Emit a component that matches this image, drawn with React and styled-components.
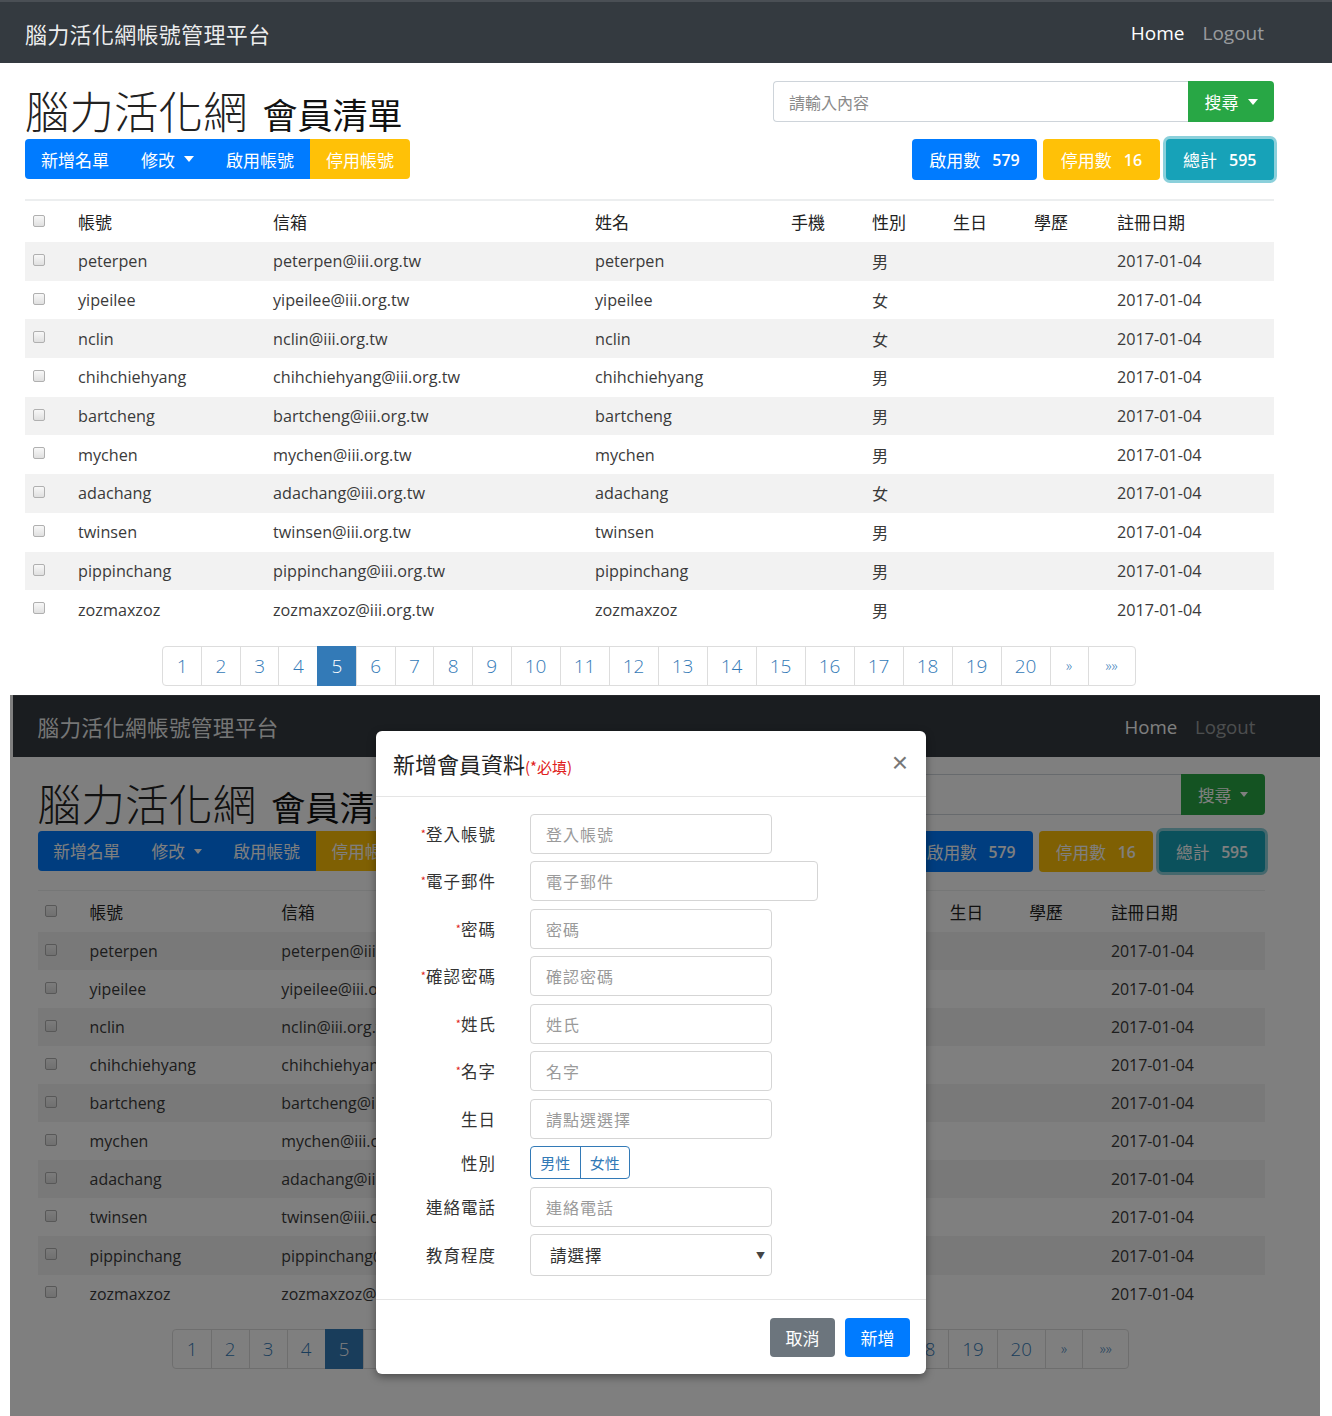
import React from "react";
import styled, { createGlobalStyle, css } from "styled-components";

const GlobalStyle = createGlobalStyle`
  html, body {
    margin: 0;
    padding: 0;
    background: #fff;
  }
  body {
    font-family: "Segoe UI", "Open Sans", "Noto Sans CJK TC", sans-serif;
    color: #333;
  }
  * {
    box-sizing: border-box;
  }
`;

const BLUE = "#007bff";
const YELLOW = "#ffc107";
const GREEN = "#28a745";
const TEAL = "#17a2b8";

const PageWrap = styled.div`
  width: 1332px;
  padding-bottom: 9px;
  background: #fff;
`;

const Navbar = styled.nav`
  height: 63px;
  background: #343a40;
  border-top: 2px solid #4a4f55;
  display: flex;
  align-items: center;
  justify-content: space-between;
  padding: 0 68px 0 25px;
`;

const Brand = styled.span`
  font-family: "Noto Sans CJK TC", sans-serif;
  font-size: 22px;
  color: rgba(255, 255, 255, 0.92);
  letter-spacing: 0.3px;
`;

const NavLinks = styled.div`
  display: flex;
  gap: 18px;
`;

const NavLink = styled.span`
  font-size: 19px;
  color: ${(p) => (p.$dim ? "rgba(255,255,255,0.5)" : "#fff")};
`;

const Content = styled.div`
  padding: 18px 58px 0 25px;
`;

const TopRow = styled.div`
  display: flex;
  justify-content: space-between;
`;

const LeftCol = styled.div`
  display: flex;
  flex-direction: column;
`;

const Heading = styled.h1`
  margin: 0;
  height: 58px;
  display: flex;
  align-items: baseline;
  font-family: "Noto Sans CJK TC", sans-serif;
  font-weight: 300;
  font-size: 44.5px;
  line-height: 58px;
  color: #222;
`;

const HeadingSmall = styled.small`
  margin-left: 15px;
  font-size: 35px;
  font-weight: 400;
  color: #111;
`;

const Caret = styled.span`
  display: inline-block;
  width: 0;
  height: 0;
  margin-left: 9px;
  vertical-align: middle;
  border-top: 6px solid currentColor;
  border-left: 5px solid transparent;
  border-right: 5px solid transparent;
`;

const BtnGroup = styled.div`
  display: flex;
  height: 40px;
  border-radius: 4px;
  overflow: hidden;
`;

const Btn = styled.button`
  border: none;
  margin: 0;
  padding: 0 ${(p) => p.$px || 16}px;
  height: ${(p) => p.$h || 40}px;
  font-family: "Noto Sans CJK TC", sans-serif;
  font-size: 17px;
  color: #fff;
  background: ${(p) => p.$bg || BLUE};
  white-space: nowrap;
  display: flex;
  align-items: center;
  ${(p) =>
    p.$round &&
    css`
      border-radius: 4px;
    `}
  ${(p) =>
    p.$focus &&
    css`
      box-shadow: 0 0 0 3px rgba(23, 162, 184, 0.5);
    `}
`;

const RightCol = styled.div`
  width: 501px;
  display: flex;
  flex-direction: column;
  align-items: flex-end;
  gap: 17px;
`;

const SearchGroup = styled.div`
  display: flex;
  width: 100%;
  height: 41px;
`;

const SearchInput = styled.input`
  flex: 1;
  height: 41px;
  border: 1px solid #ced4da;
  border-right: none;
  border-radius: 4px 0 0 4px;
  padding: 0 15px;
  font-family: "Noto Sans CJK TC", sans-serif;
  font-size: 16px;
  &::placeholder {
    color: #8a8a8a;
  }
`;

const SearchBtn = styled(Btn)`
  width: 86px;
  height: 41px;
  justify-content: center;
  border-radius: 0 4px 4px 0;
`;

const StatRow = styled.div`
  display: flex;
  gap: 6px;
`;

const StatNum = styled.span`
  margin-left: 12px;
  font-family: "Open Sans", sans-serif;
  font-size: 16px;
  font-weight: 600;
`;

const Table = styled.table`
  margin-top: 19px;
  width: 100%;
  table-layout: fixed;
  border-collapse: collapse;
`;

const Th = styled.th`
  width: ${(p) => p.$w}px;
  height: 42px;
  padding: 0 0 0 ${(p) => (p.$first ? 8 : 12)}px;
  border-top: 2px solid #eceeef;
  text-align: left;
  font-family: "Noto Sans CJK TC", sans-serif;
  font-weight: 400;
  font-size: 17px;
  color: #222;
`;

const Tr = styled.tr`
  height: 38.7px;
  background: ${(p) => (p.$odd ? "#f2f2f2" : "transparent")};
`;

const Td = styled.td`
  padding: 0 0 0 ${(p) => (p.$first ? 8 : 12)}px;
  font-size: 16.2px;
  color: #3a3a3a;
  white-space: nowrap;
  font-family: "Segoe UI", "Open Sans", "Noto Sans CJK TC", sans-serif;
`;

const Check = styled.span`
  display: inline-block;
  width: 12px;
  height: 12px;
  border: 1px solid #b0b0b0;
  border-radius: 2px;
  background: linear-gradient(#f8f8f8, #e0e0e0);
  vertical-align: middle;
  position: relative;
  top: -3px;
`;

const Pager = styled.div`
  margin-top: 17px;
  display: flex;
  justify-content: center;
`;

const PageItem = styled.span`
  height: 40px;
  min-width: ${(p) => p.$w}px;
  display: flex;
  align-items: center;
  justify-content: center;
  border: 1px solid #ddd;
  margin-left: -1px;
  font-family: "Open Sans", sans-serif;
  font-weight: 300;
  font-size: 19px;
  color: ${(p) => (p.$active ? "#fff" : "#337ab7")};
  background: ${(p) => (p.$active ? "#337ab7" : "#fff")};
  border-color: ${(p) => (p.$active ? "#337ab7" : "#ddd")};
  &:first-child {
    border-radius: 4px 0 0 4px;
  }
  &:last-child {
    border-radius: 0 4px 4px 0;
  }
`;

const Small = styled.span`
  font-size: 14px;
`;

const Shot = styled.div`
  position: relative;
  margin-left: 10px;
  width: 1310px;
  height: 721px;
  overflow: hidden;
  background: #fff;
`;

const Zoomed = styled.div`
  zoom: 0.983;
  padding-left: 3px;
`;

const Backdrop = styled.div`
  position: absolute;
  inset: 0;
  background: rgba(0, 0, 0, 0.5);
  padding: 36px 0 0 366px;
`;

const Modal = styled.div`
  width: 550px;
  background: #fff;
  border-radius: 6px;
  box-shadow: 0 3px 9px rgba(0, 0, 0, 0.4);
  font-family: "Noto Sans CJK TC", sans-serif;
`;

const ModalHeader = styled.div`
  height: 66px;
  display: flex;
  align-items: center;
  justify-content: space-between;
  padding: 0 18px 0 17px;
  border-bottom: 1px solid #e5e5e5;
`;

const ModalTitle = styled.h4`
  margin: 0;
  font-weight: 400;
  font-size: 22px;
  color: #222;
`;

const Required = styled.span`
  font-size: 15px;
  color: #e02020;
`;

const Close = styled.span`
  font-family: "Liberation Sans", sans-serif;
  font-size: 28px;
  font-weight: 300;
  color: #777;
  line-height: 1;
`;

const ModalBody = styled.div`
  display: grid;
  grid-template-columns: 120px 1fr;
  column-gap: 34px;
  row-gap: 7.5px;
  padding: 17px 0 23px;
  border-bottom: 1px solid #e5e5e5;
`;

const Label = styled.label`
  align-self: center;
  text-align: right;
  font-size: 16.5px;
  letter-spacing: 1px;
  color: #333;
`;

const Star = styled.span`
  font-size: 11px;
  color: #e02020;
  vertical-align: 3px;
  letter-spacing: 0;
`;

const Field = styled.input`
  width: ${(p) => (p.$wide ? 288 : 242)}px;
  height: 40px;
  border: 1px solid #d5d5d5;
  border-radius: 4px;
  padding: 0 15px;
  font-family: "Noto Sans CJK TC", sans-serif;
  font-size: 16px;
  letter-spacing: 1px;
  &::placeholder {
    color: #9a9a9a;
  }
`;

const Select = styled.div`
  width: 242px;
  height: 42px;
  border: 1px solid #d5d5d5;
  border-radius: 4px;
  padding: 0 5px 0 19px;
  display: flex;
  align-items: center;
  justify-content: space-between;
  font-size: 16.5px;
  letter-spacing: 1px;
  color: #333;
`;

const Arrow = styled.span`
  font-size: 9px;
  color: #444;
`;

const Toggle = styled.div`
  display: flex;
  width: 100px;
  height: 33px;
  border: 1px solid #337ab7;
  border-radius: 4px;
  overflow: hidden;
`;

const ToggleItem = styled.span`
  flex: 1;
  display: flex;
  align-items: center;
  justify-content: center;
  font-size: 15px;
  color: #337ab7;
  & + & {
    border-left: 1px solid #337ab7;
  }
`;

const ModalFooter = styled.div`
  display: flex;
  justify-content: flex-end;
  gap: 10px;
  padding: 18px 16px 17px;
`;

const members = [
  ["peterpen", "男"],
  ["yipeilee", "女"],
  ["nclin", "女"],
  ["chihchiehyang", "男"],
  ["bartcheng", "男"],
  ["mychen", "男"],
  ["adachang", "女"],
  ["twinsen", "男"],
  ["pippinchang", "男"],
  ["zozmaxzoz", "男"],
];

const columns = [
  ["帳號", 195],
  ["信箱", 322],
  ["姓名", 196],
  ["手機", 81],
  ["性別", 81],
  ["生日", 81],
  ["學歷", 83],
  ["註冊日期", 169],
];

const pages = Array.from({ length: 20 }, (_, i) => i + 1);

const Page = () => (
  <PageWrap>
    <Navbar>
      <Brand>腦力活化網帳號管理平台</Brand>
      <NavLinks>
        <NavLink>Home</NavLink>
        <NavLink $dim>Logout</NavLink>
      </NavLinks>
    </Navbar>
    <Content>
      <TopRow>
        <LeftCol>
          <Heading>
            腦力活化網<HeadingSmall>會員清單</HeadingSmall>
          </Heading>
          <BtnGroup>
            <Btn>新增名單</Btn>
            <Btn>
              修改
              <Caret />
            </Btn>
            <Btn>啟用帳號</Btn>
            <Btn $bg={YELLOW}>停用帳號</Btn>
          </BtnGroup>
        </LeftCol>
        <RightCol>
          <SearchGroup>
            <SearchInput placeholder="請輸入內容" />
            <SearchBtn $bg={GREEN}>
              搜尋
              <Caret />
            </SearchBtn>
          </SearchGroup>
          <StatRow>
            <Btn $round $h={41} $px={17.5}>
              啟用數<StatNum>579</StatNum>
            </Btn>
            <Btn $round $h={41} $px={17.5} $bg={YELLOW}>
              停用數<StatNum>16</StatNum>
            </Btn>
            <Btn $round $h={41} $px={17.5} $bg={TEAL} $focus>
              總計<StatNum>595</StatNum>
            </Btn>
          </StatRow>
        </RightCol>
      </TopRow>
      <Table>
        <thead>
          <tr>
            <Th $w={41} $first>
              <Check />
            </Th>
            {columns.map(([name, w]) => (
              <Th key={name} $w={w}>
                {name}
              </Th>
            ))}
          </tr>
        </thead>
        <tbody>
          {members.map(([id, sex], i) => (
            <Tr key={id} $odd={i % 2 === 0}>
              <Td $first>
                <Check />
              </Td>
              <Td>{id}</Td>
              <Td>{id}@iii.org.tw</Td>
              <Td>{id}</Td>
              <Td />
              <Td>{sex}</Td>
              <Td />
              <Td />
              <Td>2017-01-04</Td>
            </Tr>
          ))}
        </tbody>
      </Table>
      <Pager>
        {pages.map((n) => (
          <PageItem key={n} $w={n < 10 ? 39.7 : 50} $active={n === 5}>
            {n}
          </PageItem>
        ))}
        <PageItem $w={39}>
          <Small>»</Small>
        </PageItem>
        <PageItem $w={48}>
          <Small>»»</Small>
        </PageItem>
      </Pager>
    </Content>
  </PageWrap>
);

const fields = [
  ["登入帳號", true, "登入帳號"],
  ["電子郵件", true, "電子郵件", true],
  ["密碼", true, "密碼"],
  ["確認密碼", true, "確認密碼"],
  ["姓氏", true, "姓氏"],
  ["名字", true, "名字"],
  ["生日", false, "請點選選擇"],
];

const AddMemberModal = () => (
  <Modal>
    <ModalHeader>
      <ModalTitle>
        新增會員資料<Required>(*必填)</Required>
      </ModalTitle>
      <Close>×</Close>
    </ModalHeader>
    <ModalBody>
      {fields.map(([label, req, ph, wide]) => (
        <React.Fragment key={label}>
          <Label>
            {req && <Star>*</Star>}
            {label}
          </Label>
          <Field placeholder={ph} $wide={wide} />
        </React.Fragment>
      ))}
      <Label>性別</Label>
      <Toggle>
        <ToggleItem>男性</ToggleItem>
        <ToggleItem>女性</ToggleItem>
      </Toggle>
      <Label>連絡電話</Label>
      <Field placeholder="連絡電話" />
      <Label>教育程度</Label>
      <Select>
        請選擇
        <Arrow>▼</Arrow>
      </Select>
    </ModalBody>
    <ModalFooter>
      <Btn $round $h={39} $px={15.5} $bg="#6c757d">
        取消
      </Btn>
      <Btn $round $h={39} $px={15.5}>
        新增
      </Btn>
    </ModalFooter>
  </Modal>
);

export default function App() {
  return (
    <>
      <GlobalStyle />
      <Page />
      <Shot>
        <Zoomed>
          <Page />
        </Zoomed>
        <Backdrop>
          <AddMemberModal />
        </Backdrop>
      </Shot>
    </>
  );
}
